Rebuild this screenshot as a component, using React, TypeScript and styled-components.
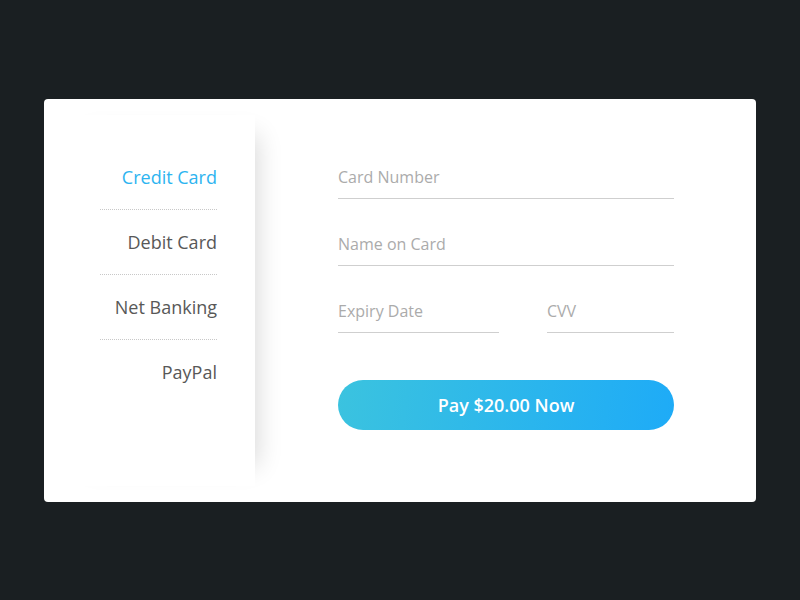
import styled, { createGlobalStyle } from "styled-components";

const GlobalStyle = createGlobalStyle`
  html, body {
    margin: 0;
    padding: 0;
    background: #1a1f22;
    font-family: "Open Sans", "Liberation Sans", sans-serif;
  }
`;

const Page = styled.div`
  width: 800px;
  height: 600px;
  display: flex;
  align-items: flex-start;
  padding: 99px 0 0 44px;
  box-sizing: border-box;
`;

const Card = styled.div`
  width: 712px;
  height: 403px;
  background: #fff;
  border-radius: 4px;
  display: flex;
  overflow: hidden;
`;

const Sidebar = styled.nav`
  width: 211px;
  margin: 16px 0;
  padding: 30px 38px 0 56px;
  box-sizing: border-box;
  background: #fff;
  box-shadow: 22px 0 24px -20px rgba(0, 0, 0, 0.16);
  display: flex;
  flex-direction: column;
`;

const MenuItem = styled.div<{ $active?: boolean; $last?: boolean }>`
  height: 64px;
  line-height: 64px;
  text-align: right;
  font-size: 18px;
  color: ${(p) => (p.$active ? "#2db4f0" : "#585858")};
  border-bottom: ${(p) => (p.$last ? "1px solid transparent" : "1px dotted #c8c8c8")};
  cursor: pointer;
`;

const Form = styled.form`
  width: 336px;
  margin-left: 83px;
  padding-top: 58px;
  display: flex;
  flex-direction: column;
  gap: 25px;
`;

const Row = styled.div`
  display: flex;
  gap: 48px;
`;

const Field = styled.input<{ $width?: number }>`
  width: ${(p) => (p.$width ? `${p.$width}px` : "100%")};
  height: 42px;
  box-sizing: border-box;
  border: none;
  border-bottom: 1px solid #cfcfcf;
  padding: 0 0 2px 0;
  font-family: inherit;
  font-size: 16px;
  color: #444;
  outline: none;
  background: transparent;

  &::placeholder {
    color: #ababab;
  }
`;

const PayButton = styled.button`
  margin-top: 22px;
  height: 50px;
  width: 100%;
  border: none;
  border-radius: 25px;
  background: linear-gradient(100deg, #3bc3df 0%, #1eabf7 100%);
  color: #fff;
  font-family: inherit;
  font-size: 18px;
  font-weight: 600;
  cursor: pointer;
`;

const methods = ["Credit Card", "Debit Card", "Net Banking", "PayPal"];

function App() {
  return (
    <>
      <GlobalStyle />
      <Page>
        <Card>
          <Sidebar>
            {methods.map((m, i) => (
              <MenuItem key={m} $active={i === 0} $last={i === methods.length - 1}>
                {m}
              </MenuItem>
            ))}
          </Sidebar>
          <Form onSubmit={(e) => e.preventDefault()}>
            <Field placeholder="Card Number" />
            <Field placeholder="Name on Card" />
            <Row>
              <Field placeholder="Expiry Date" $width={161} />
              <Field placeholder="CVV" $width={127} />
            </Row>
            <PayButton type="submit">Pay $20.00 Now</PayButton>
          </Form>
        </Card>
      </Page>
    </>
  );
}

export default App;
